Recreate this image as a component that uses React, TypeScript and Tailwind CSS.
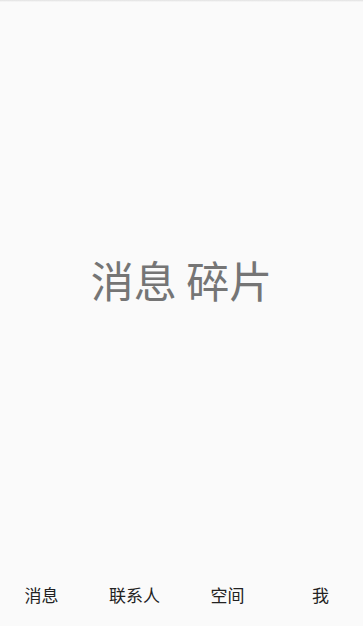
export default function App() {
  const tabs = ['消息', '联系人', '空间', '我']
  return (
    <div
      className="flex h-[626px] w-full flex-col overflow-hidden bg-[#fafafa]"
      style={{ fontFamily: '"Noto Sans CJK SC", "Noto Sans", sans-serif' }}
    >
      <div className="h-[2px] w-full bg-gradient-to-b from-[#e0e0e0] to-[#fafafa]" />
      <div className="flex flex-1 items-center justify-center pb-[12px]">
        <span className="text-[43px] leading-none text-[#757575]">消息 碎片</span>
      </div>
      <div className="-ml-[5px] grid h-[58px] w-[372px] grid-cols-4 items-center pb-[4px]">
        {tabs.map((t) => (
          <div key={t} className="text-center text-[17px] text-[#222]">
            {t}
          </div>
        ))}
      </div>
    </div>
  )
}
